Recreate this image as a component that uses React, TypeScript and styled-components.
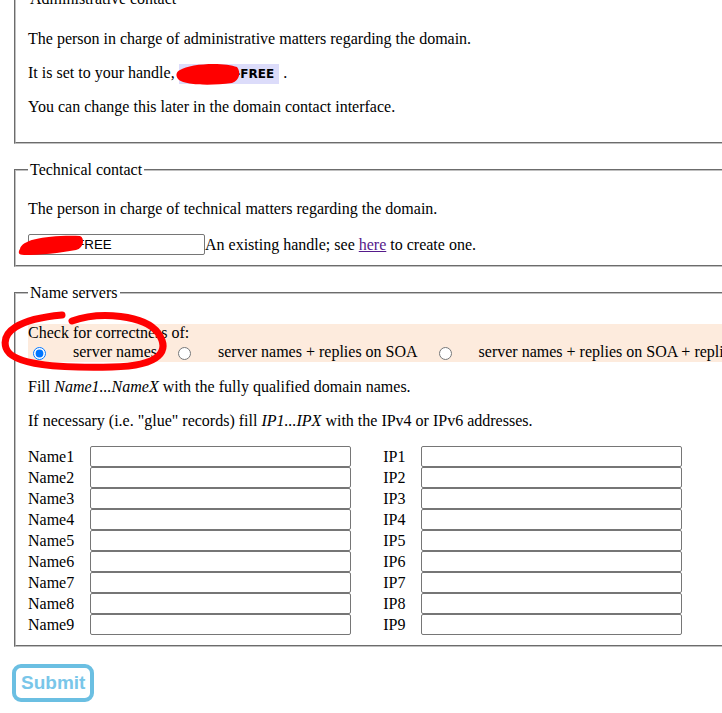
import React from 'react';
import styled, { createGlobalStyle } from 'styled-components';

const GlobalStyle = createGlobalStyle`
  html, body {
    margin: 0;
    padding: 0;
    background: #ffffff;
  }
  body {
    color: #000000;
    font-family: "Liberation Serif", "Times New Roman", serif;
    font-size: 16px;
  }
`;

// the screenshot shows a scrolled, wider page: clip it to the window
const Viewport = styled.div`
  position: relative;
  width: 722px;
  height: 713px;
  overflow: hidden;
`;

const Form = styled.form`
  width: 900px;
  margin-top: -10px;
  padding: 0 0 0 12px;
`;

const Fieldset = styled.fieldset`
  margin: 0 2px 17px;
  padding: 0.35em 0.75em 0.625em;
  border: 2px groove rgb(192, 192, 192);
  min-width: 0;
`;

const Legend = styled.legend`
  padding: 0 2px;
  font-size: 16px;
`;

const Para = styled.p`
  margin: 16px 0;
`;

const Handle = styled.span`
  background: #dcdcfa;
  padding: 3px 5px;
  font-family: "DejaVu Sans", Verdana, sans-serif;
  font-size: 12px;
  font-weight: bold;
`;

const InputRow = styled.div`
  display: flex;
  align-items: center;
  margin-top: 16px;
`;

const TextInput = styled.input<{ $width: number }>`
  box-sizing: border-box;
  width: ${p => p.$width}px;
  height: 21px;
  margin: 0;
  padding: 1px 2px;
  border: 1px solid #767676;
  border-radius: 2px;
  background: #ffffff;
  font-family: "Liberation Sans", Arial, sans-serif;
  font-size: 13.33px;
  color: #000000;
`;

const Link = styled.a`
  color: #551a8b;
  text-decoration: underline;
`;

const CheckBox = styled.div`
  margin: 16px 0;
  background: #fdebdd;
`;

const RadioRow = styled.div`
  display: flex;
  align-items: center;
  gap: 16px;
  min-height: 20px;
  white-space: nowrap;
`;

const RadioOption = styled.label`
  display: flex;
  align-items: center;
`;

const Radio = styled.input`
  width: 13px;
  height: 13px;
  margin: 3px 3px 0 5px;
`;

const RadioText = styled.span`
  margin-left: 24px;
`;

const ServerGrid = styled.div`
  display: grid;
  grid-template-columns: auto 261px auto 261px;
  grid-auto-rows: 21px;
  column-gap: 16px;
  align-items: center;
  justify-content: start;
`;

const RowLabel = styled.span<{ $indent?: boolean }>`
  padding-left: ${p => (p.$indent ? '16px' : '0')};
  line-height: 21px;
`;

const SubmitButton = styled.button`
  display: block;
  margin-top: 4px;
  padding: 4px 5px;
  background: #ffffff;
  border: 4px solid #6bbfe2;
  border-radius: 9px;
  color: #79c6e9;
  font-family: "Liberation Sans", Arial, sans-serif;
  font-size: 19px;
  font-weight: bold;
  line-height: 22px;
`;

const Annotations = styled.svg`
  position: absolute;
  left: 0;
  top: 0;
  width: 722px;
  height: 713px;
  pointer-events: none;
`;

const rows = [1, 2, 3, 4, 5, 6, 7, 8, 9];

export default function App() {
  return (
    <Viewport>
      <GlobalStyle />
      <Form onSubmit={e => e.preventDefault()}>
        <Fieldset>
          <Legend>Administrative contact</Legend>
          <Para>The person in charge of administrative matters regarding the domain.</Para>
          <Para>
            It is set to your handle, <Handle>XYZ123-FREE</Handle> .
          </Para>
          <Para>You can change this later in the domain contact interface.</Para>
        </Fieldset>

        <Fieldset>
          <Legend>Technical contact</Legend>
          <Para>The person in charge of technical matters regarding the domain.</Para>
          <InputRow>
            <TextInput $width={177} type="text" defaultValue="XYZ12-FREE" />
            <span>
              An existing handle; see <Link href="#">here</Link> to create one.
            </span>
          </InputRow>
        </Fieldset>

        <Fieldset>
          <Legend>Name servers</Legend>
          <CheckBox>
            <div>Check for correctness of:</div>
            <RadioRow>
              <RadioOption>
                <Radio type="radio" name="check" defaultChecked />
                <RadioText>server names</RadioText>
              </RadioOption>
              <RadioOption>
                <Radio type="radio" name="check" />
                <RadioText>server names + replies on SOA</RadioText>
              </RadioOption>
              <RadioOption>
                <Radio type="radio" name="check" />
                <RadioText>server names + replies on SOA + replies on NS</RadioText>
              </RadioOption>
            </RadioRow>
          </CheckBox>
          <Para>
            Fill <i>Name1...NameX</i> with the fully qualified domain names.
          </Para>
          <Para>
            If necessary (i.e. "glue" records) fill <i>IP1...IPX</i> with the IPv4 or IPv6 addresses.
          </Para>
          <ServerGrid>
            {rows.map(n => (
              <React.Fragment key={n}>
                <RowLabel>Name{n}</RowLabel>
                <TextInput $width={261} type="text" />
                <RowLabel $indent>IP{n}</RowLabel>
                <TextInput $width={261} type="text" />
              </React.Fragment>
            ))}
          </ServerGrid>
        </Fieldset>

        <SubmitButton type="submit">Submit</SubmitButton>
      </Form>

      <Annotations viewBox="0 0 722 713">
        <path
          d="M180 70 C190 63, 225 62, 237 67 C241 72, 240 80, 232 83 C210 86, 185 85, 179 80 C175 76, 176 72, 180 70 Z"
          fill="#ff0000"
        />
        <path
          d="M20 249 C22 240, 45 235, 80 236 C85 238, 84 248, 76 250 C60 253, 40 255, 24 255 C18 255, 18 252, 20 249 Z"
          fill="#ff0000"
        />
        <path
          d="M72 321 C100 311, 145 315, 158 333 C170 350, 162 366, 112 367 C62 368, 12 366, 6 348 C1 332, 18 319, 62 315"
          fill="none"
          stroke="#ff0000"
          strokeWidth="7"
          strokeLinecap="round"
          strokeLinejoin="round"
        />
      </Annotations>
    </Viewport>
  );
}
